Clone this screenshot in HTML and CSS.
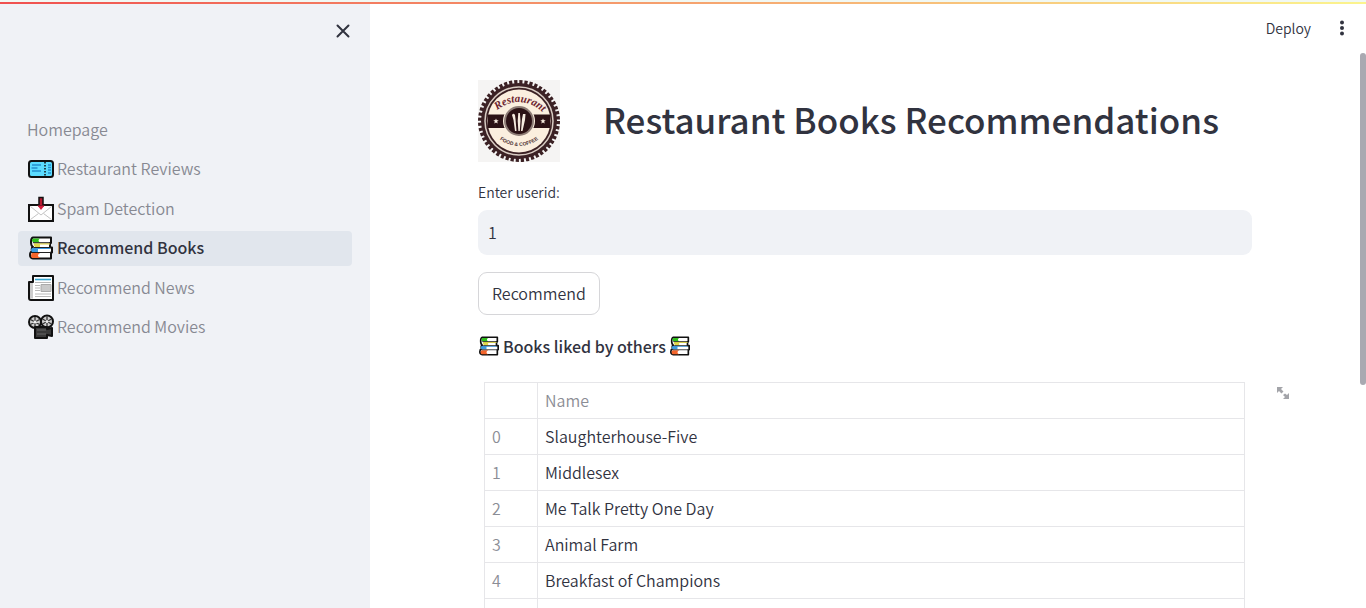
FILE: index.html
```html
<!DOCTYPE html>
<html lang="en">
<head>
<meta charset="utf-8">
<meta name="viewport" content="width=device-width, initial-scale=1">
<title>Recommend Books</title>
<link rel="stylesheet" href="styles.css">
</head>
<body>
<svg class="defs" aria-hidden="true">
  <symbol id="books" viewBox="0 0 24 24">
    <path d="M4 1.500h18v5.500h-1v4.500h2v5h-1v6H4Q1 22 1 19q0-3 2-3.500-1-4 1-4.500Q2 10 2 6q0-4 2-4.500z" fill="#fff" stroke="#111" stroke-width="2" stroke-linejoin="round"/>
    <path d="M4 2.500h7q-3 2 0 4H4Q2 4 4 2.500z" fill="#2fbf1c"/>
    <path d="M5 7.200h16v1.300H11V11H6Q4 9 5 7.200z" fill="#e3d94b"/>
    <path d="M3 12h18v1H9v3H3Q1 14 3 12z" fill="#3c9be0"/>
    <path d="M3 17h8q-4 2.500 0 5H3Q1 20 3 17z" fill="#f4652b"/>
    <path d="M4 6.700h17M5 11.500h17M3 16.500h19" fill="none" stroke="#222" stroke-width="1"/>
  </symbol>
</svg>
<div class="decoration"></div>
<div class="app">
  <aside class="sidebar">
    <div class="sidebar-head">
      <button class="icon-button" type="button" aria-label="Close sidebar">
        <svg width="14" height="14" viewBox="0 0 14 14"><path d="M1.500 1.500l11 11M12.500 1.500l-11 11" stroke="#31333f" stroke-width="2" stroke-linecap="round"/></svg>
      </button>
    </div>
    <nav>
      <ul class="nav-list">
        <li><a class="nav-link" href="#home">Homepage</a></li>
        <li><a class="nav-link" href="#reviews">
          <svg class="nav-icon" viewBox="0 0 26 26"><rect x="1" y="5" width="24" height="16" rx="2.500" fill="#5bdcff" stroke="#111" stroke-width="2"/><path d="M4 9h9M3.500 12h6M4 15h9M20 9h3M20 11.500h3M20 14h3M20 17h3" stroke="#258fce" stroke-width="1.600"/><path d="M17 6v14" stroke="#111" stroke-width="1.500" stroke-dasharray="1.500 1.500"/></svg>
          Restaurant Reviews</a></li>
        <li><a class="nav-link" href="#spam">
          <svg class="nav-icon" viewBox="0 0 26 26"><rect x="1" y="9" width="24" height="16" fill="#fff" stroke="#111" stroke-width="2"/><path d="M2.500 10.500L13 19l10.500-8.500M2.500 23.500l8-6M23.500 23.500l-8-6" fill="none" stroke="#c4c4c4"/><path d="M11 1.500h4V10h-4z" fill="#b71930" stroke="#111" stroke-width="1.500"/><path d="M9.500 9.500h7L13 14z" fill="#d51e3e"/></svg>
          Spam Detection</a></li>
        <li><a class="nav-link active" href="#books-page" aria-current="page">
          <svg class="nav-icon"><use href="#books"/></svg>
          Recommend Books</a></li>
        <li><a class="nav-link" href="#news">
          <svg class="nav-icon" viewBox="0 0 26 26"><path d="M5 1h20v24H3q-2 0-2-2V7h4z" fill="#fff" stroke="#111" stroke-width="2" stroke-linejoin="round"/><path d="M2 8h3v15.500H3q-1 0-1-1z" fill="#ccc"/><path d="M7 4.500h16" stroke="#36a5cf" stroke-width="1.600"/><path d="M7 7.500h16M7 10.500h5M7 13h5M7 15.500h5M7 19h16M7 21.500h16" stroke="#b8b8b8"/><path d="M13 9.500h10v7H13z" fill="#c9c9c9" stroke="#aaa"/></svg>
          Recommend News</a></li>
        <li><a class="nav-link" href="#movies">
          <svg class="nav-icon" viewBox="0 0 26 26"><g fill="#cfcfcf" stroke="#111" stroke-width="2"><circle cx="7" cy="8" r="6"/><circle cx="19" cy="7.500" r="6"/></g><path d="M7 3v10M2.500 5.500l9 5M11.500 5.500l-9 5M19 2.500v10M14.500 5l9 5M23.500 5l-9 5" stroke="#333" stroke-width="1.300"/><circle cx="7" cy="8" r="1.500" fill="#eee"/><circle cx="19" cy="7.500" r="1.500" fill="#eee"/><path d="M7 13h12v2l5-1v8l-5-1v3H7z" fill="#383838" stroke="#111" stroke-width="2" stroke-linejoin="round"/><path d="M9 16h9M9 20h9" stroke="#666"/></svg>
          Recommend Movies</a></li>
      </ul>
    </nav>
  </aside>
  <main class="main">
    <header class="toolbar">
      <button class="deploy" type="button">Deploy</button>
      <button class="icon-button" type="button" aria-label="Menu">
        <svg width="6" height="16" viewBox="0 0 6 16" fill="#31333f"><circle cx="3" cy="2.500" r="2"/><circle cx="3" cy="8" r="2"/><circle cx="3" cy="13.500" r="2"/></svg>
      </button>
    </header>
    <div class="content">
      <div class="title-row">
        <svg class="logo" viewBox="0 0 82 82" role="img" aria-label="Restaurant food and coffee">
          <rect width="82" height="82" fill="#f5f4f3"/>
          <circle cx="41" cy="41" r="39" fill="none" stroke="#3b2124" stroke-width="4" stroke-dasharray="3.200 1.905"/>
          <circle cx="41" cy="41" r="38" fill="#3b2124"/>
          <circle cx="41" cy="41" r="34" fill="none" stroke="#d9cdc4" stroke-width="1.500"/>
          <circle cx="41" cy="41" r="31.500" fill="#fbefdf"/>
          <path d="M10 34.500h62v13.500H10z" fill="#2b1215"/>
          <circle cx="41" cy="41" r="16" fill="#fbefdf"/>
          <circle cx="41" cy="41" r="15" fill="#8d7c76"/>
          <circle cx="41" cy="41" r="13" fill="#2b1215"/>
          <path d="M34 35q1.500-2.500 3 0l.500 4 1 12H37l-1.500-11zM40.300 33h1.600l.600 8-.700 10h-1.400l-.700-10zM45 34h2.500l-.500 6-2.500 11H43l1-12z" fill="#f6ebdf"/>
          <path d="M18 38.500l.800 1.800h1.900l-1.500 1.300.500 2-1.700-1.100-1.700 1.100.500-2-1.500-1.300h1.900zM65 38.500l.800 1.800h1.900l-1.500 1.300.500 2-1.700-1.100-1.700 1.100.500-2-1.500-1.300h1.900z" fill="#f6ebdf"/>
          <path id="arc-top" d="M17 32Q41 11 67 34" fill="none"/>
          <path id="arc-bottom" d="M17 56Q41 76 65 56" fill="none"/>
          <text class="logo-name" text-anchor="middle"><textPath href="#arc-top" startOffset="50%">Restaurant</textPath></text>
          <text class="logo-tag" text-anchor="middle"><textPath href="#arc-bottom" startOffset="50%">FOOD &amp; COFFEE</textPath></text>
        </svg>
        <h1>Restaurant Books Recommendations</h1>
      </div>
      <form class="form">
        <label for="userid">Enter userid:</label>
        <input id="userid" type="text" value="1">
        <button class="submit" type="button">Recommend</button>
      </form>
      <h2 class="subtitle"><svg class="title-icon"><use href="#books"/></svg>Books liked by others<svg class="title-icon"><use href="#books"/></svg></h2>
      <div class="table-wrap">
        <table>
          <thead><tr><th class="index"></th><th>Name</th></tr></thead>
          <tbody>
            <tr><td class="index">0</td><td>Slaughterhouse-Five</td></tr>
            <tr><td class="index">1</td><td>Middlesex</td></tr>
            <tr><td class="index">2</td><td>Me Talk Pretty One Day</td></tr>
            <tr><td class="index">3</td><td>Animal Farm</td></tr>
            <tr><td class="index">4</td><td>Breakfast of Champions</td></tr>
            <tr><td class="index"></td><td></td></tr>
          </tbody>
        </table>
        <button class="expand" type="button" aria-label="View fullscreen">
          <svg width="14" height="14" viewBox="0 0 14 14" fill="#a3a4a9"><path d="M1 1h6L5 3l2.500 2.500-2 2L3 5 1 7zM13 13H7l2-2-2-2 2-1.500L11 9l2-2z"/></svg>
        </button>
      </div>
    </div>
    <div class="scroll-thumb"></div>
  </main>
</div>
</body>
</html>
```
FILE: styles.css
```css
* { box-sizing: border-box; }
body {
  margin: 0;
  height: 100vh;
  overflow: hidden;
  background: #fff;
  color: #31333f;
  font: 350 16px/24px "Noto Sans CJK SC", "Noto Sans", sans-serif;
}
button, input { font: inherit; color: inherit; }
button { cursor: pointer; }
.defs { position: absolute; width: 0; height: 0; }
.decoration {
  position: absolute;
  inset: 0 0 auto;
  height: 4px;
  border-top: 2px solid #f1f8f3;
  background: linear-gradient(90deg, #f0504f, #fbf48e);
  z-index: 2;
}
.app { display: flex; height: 100%; }
.sidebar { flex: 0 0 370px; padding: 0 18px; background: #f0f2f6; }
.sidebar-head {
  display: flex;
  justify-content: flex-end;
  align-items: flex-start;
  height: 112px;
  padding: 24px 2px 0 0;
}
.icon-button, .deploy, .expand { display: flex; padding: 0; border: 0; background: none; }
.nav-list {
  display: grid;
  grid-auto-rows: 35px;
  align-content: space-between;
  height: 233px;
  margin: 0;
  padding: 0;
  list-style: none;
}
.nav-link {
  display: flex;
  align-items: center;
  gap: 3px;
  height: 100%;
  padding: 0 9px 2px;
  border-radius: 4px;
  color: #878992;
  text-decoration: none;
}
.nav-icon { width: 26px; height: 26px; margin: 2px 0 0 1px; }
.nav-link.active { background: #e1e6ed; color: #31333f; font-weight: 500; }
.active .nav-icon { padding: 1px; }
.main { position: relative; flex: 1; min-width: 0; padding-right: 6px; }
.toolbar {
  display: flex;
  justify-content: flex-end;
  align-items: center;
  gap: 28px;
  height: 56px;
  padding-right: 15px;
}
.deploy { padding-bottom: 1px; font-size: 14px; }
.content { max-width: 774px; margin: 0 auto; padding-top: 24px; }
.title-row { display: flex; align-items: center; gap: 43px; }
.logo { flex: none; width: 82px; height: 82px; }
.logo-name { font: italic bold 11px "Liberation Serif", serif; fill: #6d2530; }
.logo-tag { font: bold 5px "Liberation Sans", sans-serif; fill: #4b3032; }
h1 {
  margin: 0;
  padding-bottom: 4px;
  font-size: 35px;
  line-height: 44px;
  font-weight: 500;
  white-space: nowrap;
}
.form { display: flex; flex-direction: column; align-items: flex-start; padding-top: 18px; }
.form label { font-size: 14px; }
.form input {
  width: 100%;
  height: 45px;
  margin: 6px 0 17px;
  padding: 0 10px 2px;
  border: 0;
  border-radius: 9px;
  background: #f0f2f6;
}
.submit {
  height: 43px;
  padding: 0 13px 2px;
  border: 1px solid #d6d6d9;
  border-radius: 9px;
  background: #fff;
}
.subtitle {
  display: flex;
  align-items: center;
  gap: 4px;
  margin: 19px 0 24px;
  padding: 0 0 0 1px;
  font-size: 16px;
  line-height: 24px;
  font-weight: 500;
}
.title-icon { width: 20px; height: 20px; }
.table-wrap { position: relative; padding: 0 7px 0 6px; }
table { width: 100%; border-collapse: collapse; table-layout: fixed; }
th, td {
  height: 36px;
  padding: 0 7px 2px;
  border: 1px solid #e6e6e9;
  font-weight: 350;
  text-align: left;
}
th, .index { color: #8b8d95; }
.index { width: 53px; }
.expand { position: absolute; top: 4px; right: -38px; }
.scroll-thumb {
  position: absolute;
  top: 53px;
  right: 0;
  width: 6px;
  height: 332px;
  border-radius: 3px;
  background: #a9a9b1;
}
```
